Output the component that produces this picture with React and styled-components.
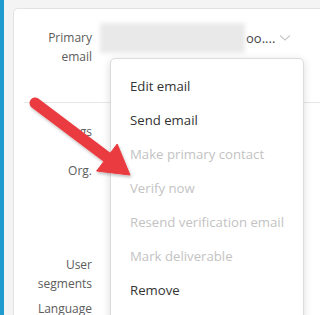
import React from "react";
import styled, { createGlobalStyle } from "styled-components";

const GlobalStyle = createGlobalStyle`
  html, body {
    margin: 0;
    padding: 0;
    background: #f4f4f4;
    font-family: "Open Sans", "Noto Sans", Arial, sans-serif;
    overflow: hidden;
  }
`;

const Page = styled.div`
  position: relative;
  display: flex;
  width: 320px;
  height: 315px;
  overflow: hidden;
`;

const SideStrip = styled.div`
  flex: 0 0 4px;
  background: #1f9bcf;
`;

const Content = styled.div`
  flex: 1;
  padding: 8px 0 0 9px;
`;

const Card = styled.div`
  position: relative;
  width: 330px;
  height: 330px;
  background: #fff;
  border: 1px solid #e2e2e2;
  border-radius: 5px;
  box-sizing: border-box;
`;

const FieldList = styled.div`
  display: flex;
  flex-direction: column;
  padding-top: 20px;
`;

const Field = styled.div`
  display: flex;
  align-items: flex-start;
  margin-top: ${(p) => p.$space || 0}px;
`;

const Label = styled.div`
  flex: 0 0 78px;
  text-align: right;
  font-size: 12px;
  line-height: 18.5px;
  color: #5c5c5c;
`;

const EmailValue = styled.div`
  display: flex;
  align-items: center;
  margin-left: 8px;
  margin-top: -6px;
  height: 30px;
`;

const Blurred = styled.div`
  width: 145px;
  height: 30px;
  background: #e9e9e9;
  filter: blur(2px);
`;

const EmailTail = styled.span`
  font-size: 13px;
  color: #444;
  margin-left: 1px;
`;

const Chevron = styled.svg`
  margin-left: 4px;
  width: 12px;
  height: 8px;
`;

const Divider = styled.div`
  margin: 36px 4px 0 10px;
  height: 1px;
  background: #e6e6e6;
`;

const Menu = styled.ul`
  position: absolute;
  left: 96px;
  top: 49px;
  width: 194px;
  height: 300px;
  margin: 0;
  padding: 10px 0 0;
  list-style: none;
  background: #fff;
  border: 1px solid #dcdcdc;
  border-radius: 5px;
  box-sizing: border-box;
  box-shadow: 0 2px 8px rgba(0, 0, 0, 0.14);
`;

const MenuItem = styled.li`
  height: 34px;
  display: flex;
  align-items: center;
  padding-left: 19px;
  font-size: 13.2px;
  color: ${(p) => (p.$disabled ? "#c3c3c3" : "#333")};
  white-space: nowrap;
`;

const ArrowLayer = styled.svg`
  position: absolute;
  left: 0;
  top: 0;
  pointer-events: none;
`;

const items = [
  { text: "Edit email" },
  { text: "Send email" },
  { text: "Make primary contact", disabled: true },
  { text: "Verify now", disabled: true },
  { text: "Resend verification email", disabled: true },
  { text: "Mark deliverable", disabled: true },
  { text: "Remove" },
];

export default function App() {
  return (
    <>
      <GlobalStyle />
      <Page>
        <SideStrip />
        <Content>
          <Card>
            <FieldList>
              <Field>
                <Label>
                  Primary
                  <br />
                  email
                </Label>
                <EmailValue>
                  <Blurred />
                  <EmailTail>oo....</EmailTail>
                  <Chevron viewBox="0 0 12 8">
                    <path d="M1 1.5 L6 6 L11 1.5" fill="none" stroke="#c8c8c8" strokeWidth="1.2" />
                  </Chevron>
                </EmailValue>
              </Field>
              <Divider />
              <Field $space={20}>
                <Label>Tags</Label>
              </Field>
              <Field $space={20}>
                <Label>Org.</Label>
              </Field>
              <Field $space={76}>
                <Label>
                  User
                  <br />
                  segments
                </Label>
              </Field>
              <Field $space={7}>
                <Label>Language</Label>
              </Field>
            </FieldList>
            <Menu>
              {items.map((it) => (
                <MenuItem key={it.text} $disabled={it.disabled}>
                  {it.text}
                </MenuItem>
              ))}
            </Menu>
          </Card>
        </Content>
        <ArrowLayer width="320" height="315" viewBox="0 0 320 315">
          <defs>
            <filter id="arrowShadow" x="-20%" y="-20%" width="140%" height="140%">
              <feDropShadow dx="1" dy="2" stdDeviation="1.5" floodColor="#000" floodOpacity="0.25" />
            </filter>
          </defs>
          <g filter="url(#arrowShadow)" fill="#ea3b3f" stroke="#ea3b3f">
            <line x1="35" y1="103" x2="108" y2="158" strokeWidth="11" strokeLinecap="round" />
            <polygon points="130,175 96.6,171 117.2,144" strokeWidth="1" strokeLinejoin="round" />
          </g>
        </ArrowLayer>
      </Page>
    </>
  );
}
